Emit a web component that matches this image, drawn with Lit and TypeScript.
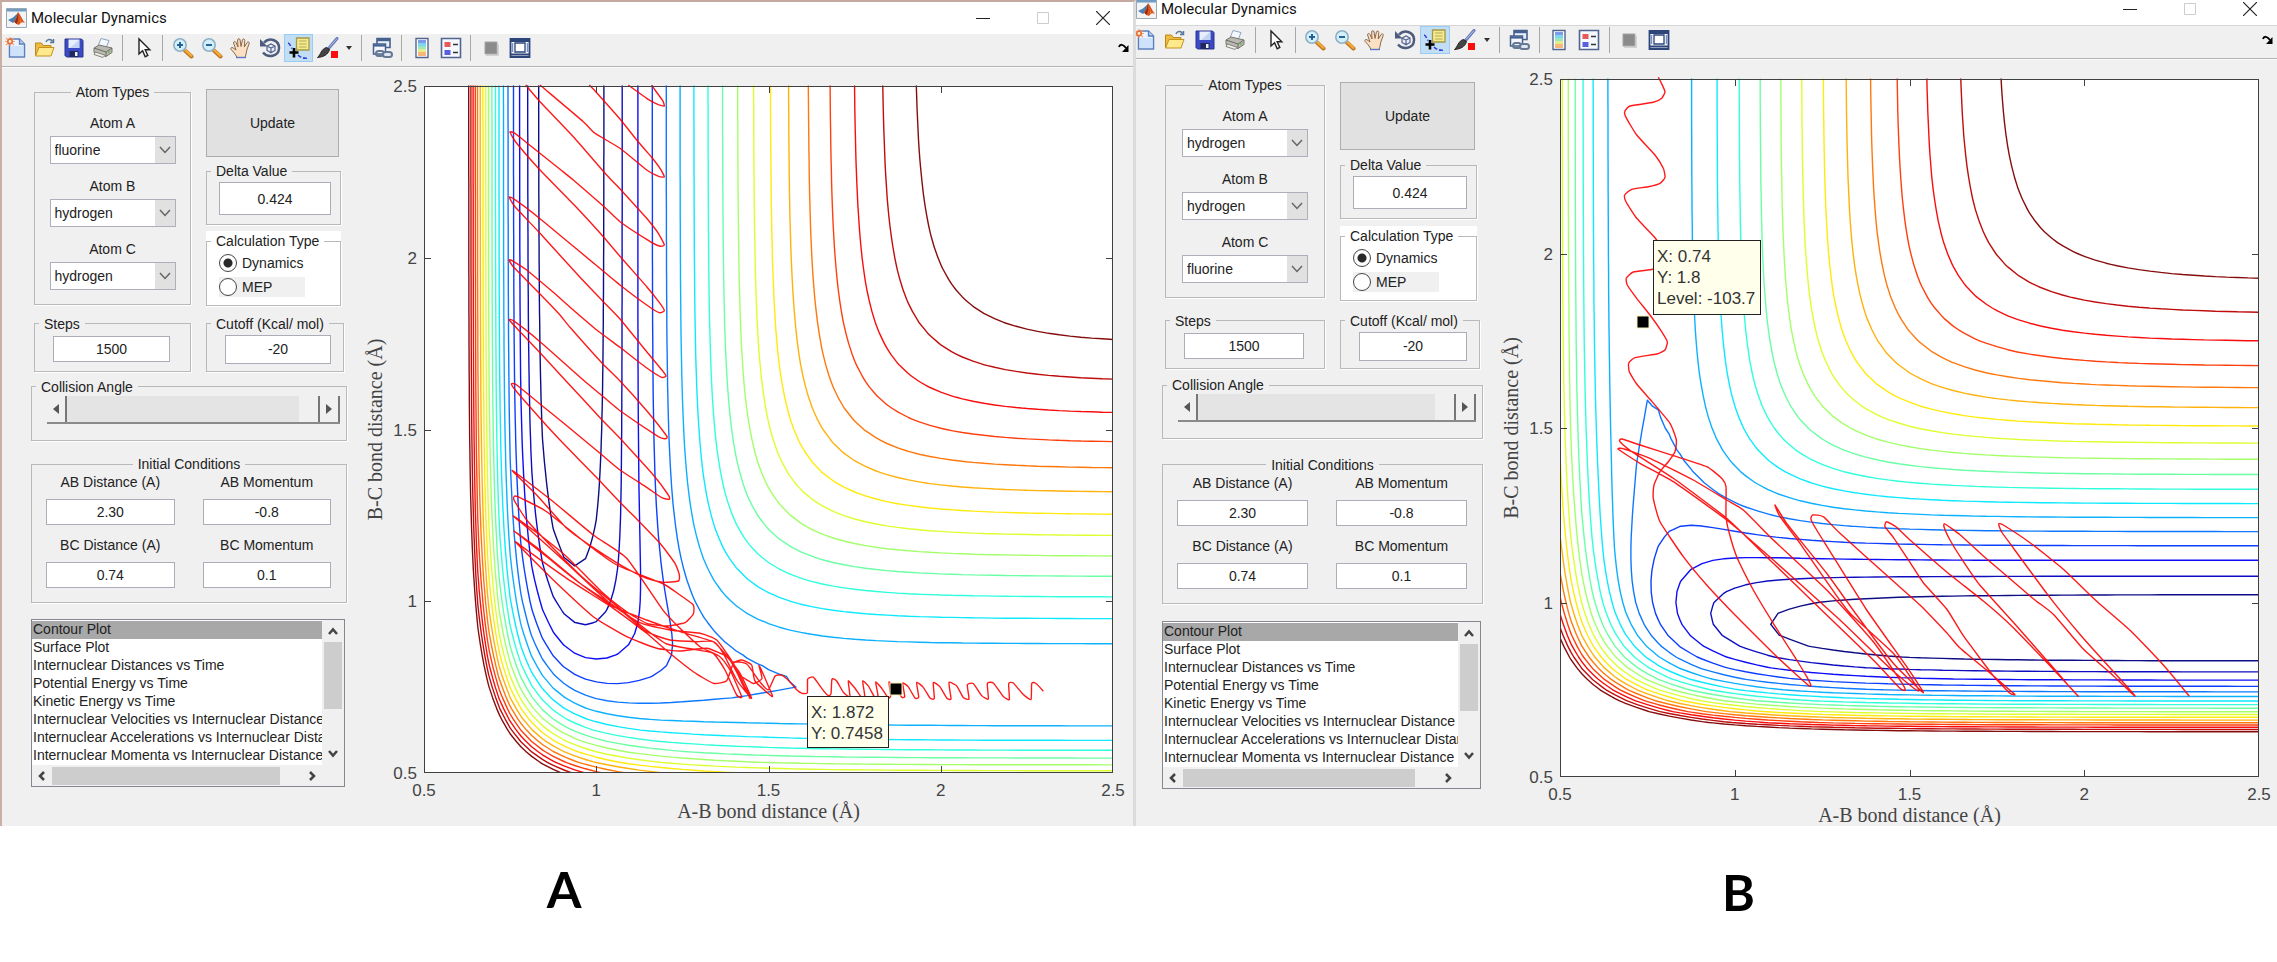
import { LitElement, html, css, svg } from "lit";
import { customElement, property } from "lit/decorators.js";

type Pt = [number, number];

/* ---------- potential energy surface (collinear LEPS, F + H2) ---------- */

const HF = { d: 141.2, a: 2.2189, re: 0.9168 };
const HH = { d: 109.5, a: 1.942, re: 0.7419 };
const SATO = 0.193;

function terms(m: { d: number; a: number; re: number }, r: number) {
  const e1 = Math.exp(-m.a * (r - m.re));
  const e2 = e1 * e1;
  const k = m.d / 4 / (1 + SATO);
  return {
    q: k * ((3 + SATO) * e2 - (2 + 6 * SATO) * e1),
    j: k * ((1 + 3 * SATO) * e2 - (6 + 2 * SATO) * e1),
  };
}

function energy(rHF: number, rHH: number): number {
  const a = terms(HF, rHF);
  const b = terms(HH, rHH);
  const c = terms(HF, rHF + rHH);
  const s = (a.j - b.j) ** 2 + (b.j - c.j) ** 2 + (c.j - a.j) ** 2;
  return a.q + b.q + c.q - Math.sqrt(s / 2);
}

const LEVELS = 18;
const TOP_LEVEL = -28.7;
const LEVEL_STEP = 6.25;

function jet(t: number): string {
  const ch = (c: number) =>
    Math.round(255 * Math.max(0, Math.min(1, 1.5 - Math.abs(4 * t - c))));
  return `rgb(${ch(3)},${ch(2)},${ch(1)})`;
}

/* Marching squares over a regular grid; each level becomes one path in data units. */
function contours(): { color: string; lines: [Pt, Pt][] }[] {
  const n = 64;
  const at = (i: number) => 0.5 + (i * 2) / n;
  const v: number[][] = [];
  for (let i = 0; i <= n; i++) {
    v.push([]);
    for (let j = 0; j <= n; j++) v[i].push(energy(at(i), at(j)));
  }
  const out: { color: string; lines: [Pt, Pt][] }[] = [];
  for (let k = 0; k < LEVELS; k++) {
    const lv = TOP_LEVEL - k * LEVEL_STEP;
    const lines: [Pt, Pt][] = [];
    for (let i = 0; i < n; i++) {
      for (let j = 0; j < n; j++) {
        const c: [number, number, number][] = [
          [at(i), at(j), v[i][j]],
          [at(i + 1), at(j), v[i + 1][j]],
          [at(i + 1), at(j + 1), v[i + 1][j + 1]],
          [at(i), at(j + 1), v[i][j + 1]],
        ];
        const hit: Pt[] = [];
        for (let e = 0; e < 4; e++) {
          const p = c[e];
          const q = c[(e + 1) % 4];
          if (p[2] < lv !== q[2] < lv) {
            const t = (lv - p[2]) / (q[2] - p[2]);
            hit.push([p[0] + t * (q[0] - p[0]), p[1] + t * (q[1] - p[1])]);
          }
        }
        for (let h = 0; h + 1 < hit.length; h += 2) lines.push([hit[h], hit[h + 1]]);
      }
    }
    out.push({ color: jet(1 - k / (LEVELS - 1)), lines });
  }
  return out;
}

const CONTOURS = contours();

/* ---------- trajectories ---------- */

/* Moves sampled points into chart units. */
const place = (ox: number, oy: number, kx: number, ky: number, p: number[]): Pt[] => {
  const out: Pt[] = [];
  for (let i = 0; i < p.length; i += 2) out.push([ox + p[i] / kx, oy + p[i + 1] / ky]);
  return out;
};

/* Catmull-Rom spline through the points. */
function spline(p: Pt[]): string {
  const f = (n: number) => n.toFixed(1);
  let d = `M${f(p[0][0])} ${f(p[0][1])}`;
  for (let i = 0; i + 1 < p.length; i++) {
    const a = p[Math.max(0, i - 1)];
    const b = p[i];
    const c = p[i + 1];
    const e = p[Math.min(p.length - 1, i + 2)];
    const k = 12;
    d += `C${f(b[0] + (c[0] - a[0]) / k)} ${f(b[1] + (c[1] - a[1]) / k)} ${f(
      c[0] - (e[0] - b[0]) / k
    )} ${f(c[1] - (e[1] - b[1]) / k)} ${f(c[0])} ${f(c[1])}`;
  }
  return d;
}

const TRACK_A: string[] = [
  spline(place(20, 3, 3, 3, [815, 45, 825, 60, 848, 92, 853, 108, 835, 104, 800, 85, 745, 45])),
  spline(place(20, 3, 3, 3, [628, 45, 650, 68, 720, 147, 770, 210, 815, 262, 840, 295, 853, 320, 838, 320, 800, 300, 720, 235, 645, 190, 610, 155, 480, 45])),
  spline([
    ...place(20, 3, 3, 3, [
      437, 45, 480, 95, 580, 200, 680, 315, 725, 362, 800, 445, 835, 490, 853, 525, 838, 528, 800, 508, 720, 455, 670, 408,
      580, 330, 540, 298, 440, 218, 405, 190, 390, 186, 410, 220, 480, 300, 580, 402, 670, 500, 725, 565, 800, 650, 840, 700,
      853, 722, 838, 728, 800, 705, 720, 645, 645, 583, 480, 446, 400, 386, 388, 382, 405, 410, 480, 490, 600, 622, 670, 695,
      720, 747, 800, 845, 850, 905, 858, 918, 845, 922, 795, 890, 720, 832, 650, 780, 580, 720, 520, 667, 440, 600, 400, 574,
      388, 569, 400, 590, 480, 672, 540, 735, 570, 772, 665, 878, 720, 933, 800, 1022, 860, 1098, 855, 1106, 835, 1100,
      720, 1022, 660, 972, 610, 930, 480, 815, 400, 752, 388, 750, 420, 785, 480, 848, 560, 935, 660, 1043, 720, 1105,
      820, 1215, 865, 1275, 868, 1288, 845, 1283, 800, 1252, 720, 1200, 660, 1150, 555, 1063, 490, 1010, 410, 945, 394, 942,
      410, 965, 480, 1045, 540, 1110, 655, 1228, 720, 1297, 770, 1347, 840, 1420, 885, 1480, 898, 1515, 895, 1533, 850, 1537,
      800, 1525, 730, 1490, 625, 1423, 560, 1375, 470, 1275, 397, 1202,
    ]),
    ...place(20, 373, 3, 3, [
      420, 108, 520, 185, 640, 285, 740, 355, 850, 512, 900, 565, 960, 620, 1020, 650, 1050, 690, 1085, 770, 1070, 765, 1035, 690,
      1000, 640, 940, 628, 860, 612, 800, 570, 700, 490, 600, 405, 520, 325, 440, 240, 402, 180, 405, 168, 430, 178, 500, 215,
      625, 315, 710, 375, 850, 432, 900, 465, 940, 495, 940, 522, 915, 548, 860, 558, 800, 550, 740, 515, 670, 460, 560, 350,
      480, 285, 400, 228, 450, 270, 560, 370, 690, 490, 780, 548, 870, 570, 960, 580, 1010, 600, 1060, 670, 1110, 775, 1090, 735,
      1050, 660, 1000, 605, 950, 605, 870, 600, 800, 575, 720, 510, 600, 430, 500, 350, 402, 273, 480, 330, 600, 430, 700, 500,
      800, 540, 900, 575, 1000, 605, 1030, 640, 1070, 720, 1115, 775, 1080, 700, 1040, 650, 980, 625, 900, 633, 830, 625,
      740, 590, 640, 530, 520, 420, 407, 307, 440, 330, 560, 415, 700, 505, 800, 580, 860, 632, 940, 695, 1000, 730, 1040, 722,
      1060, 670, 1085, 660, 1115, 675,
    ]),
    ...place(380, 2, 3, 2.0587, [
      45, 1260, 97, 1292, 85, 1270, 57, 1228, 66, 1255, 40, 1265, 0, 1250, 30, 1292, 10, 1270, -20, 1222, 20, 1225, 60, 1262,
      85, 1278, 105, 1250, 125, 1248, 150, 1262, 170, 1278, 185, 1285, 202, 1284, 203, 1256, 220, 1252, 245, 1275, 265, 1290,
      273, 1286, 276, 1256, 290, 1260, 310, 1283, 330, 1293, 325, 1260, 345, 1275, 363, 1292, 374, 1290, 368, 1260, 385, 1270,
      403, 1292, 414, 1290, 407, 1262, 425, 1275, 445, 1295, 452, 1290, 447, 1262, 465, 1275, 485, 1293, 494, 1292, 488, 1264,
      505, 1272, 525, 1295, 536, 1293, 530, 1263, 550, 1273, 570, 1295, 583, 1296, 580, 1263, 600, 1272, 620, 1295, 633, 1297,
      627, 1263, 650, 1270, 670, 1294, 687, 1297, 682, 1268, 700, 1265, 725, 1290, 745, 1297, 742, 1265, 760, 1264, 790, 1292,
      808, 1298, 806, 1265, 820, 1264, 850, 1288, 873, 1298, 875, 1265, 886, 1264, 910, 1281,
    ]),
  ]),
];

const TRACK_B: string[] = [
  spline(place(44, 1, 3, 3, [
    355, 52, 362, 65, 375, 95, 365, 115, 340, 127, 270, 138, 254, 155, 258, 172, 290, 225, 345, 285, 370, 325, 375, 352,
    360, 370, 325, 380, 275, 388, 254, 405, 258, 425, 290, 475, 345, 533, 380, 590, 375, 615, 338, 628, 280, 636, 259, 655,
    262, 675, 290, 715, 330, 765, 365, 815, 382, 845, 375, 870, 350, 882, 285, 893, 266, 910, 268, 935, 290, 972, 330, 1018,
    390, 1090, 409, 1140, 405, 1175, 385, 1205, 360, 1235, 342, 1275, 340, 1315, 360, 1385, 430, 1490, 500, 1575, 580, 1660,
    700, 1780, 770, 1845, 808, 1878, 812, 1874, 800, 1850, 770, 1800, 700, 1690, 640, 1590, 590, 1490, 568, 1420, 558, 1370,
    558, 1280, 545, 1255, 500, 1220, 400, 1187, 300, 1155, 245, 1137, 240, 1145, 280, 1178, 400, 1255, 560, 1375, 700, 1510,
    850, 1655, 1000, 1800, 1080, 1885, 1096, 1890, 1080, 1860, 1000, 1745, 860, 1590, 700, 1440, 610, 1350, 560, 1320,
    460, 1260, 330, 1195, 250, 1166, 235, 1168, 300, 1210, 400, 1265, 560, 1380, 700, 1500, 900, 1680, 1050, 1825, 1125, 1887,
    1135, 1887, 1060, 1780, 930, 1660, 860, 1565, 780, 1450, 720, 1370, 705, 1335, 740, 1390, 860, 1540, 950, 1665,
    1060, 1810, 1150, 1898, 1100, 1820, 980, 1650, 880, 1490, 830, 1410, 813, 1378, 818, 1365, 850, 1370, 900, 1420,
    1050, 1555, 1140, 1635, 1220, 1718, 1260, 1764, 1350, 1839, 1415, 1895, 1425, 1904, 1410, 1900, 1360, 1847, 1270, 1727,
    1220, 1647, 1150, 1568, 1110, 1507, 1060, 1432, 1035, 1400, 1040, 1385, 1070, 1402, 1110, 1440, 1220, 1536, 1330, 1623,
    1420, 1703, 1520, 1807, 1600, 1892, 1615, 1909, 1590, 1882, 1540, 1823, 1420, 1687, 1320, 1576, 1270, 1504, 1230, 1440,
    1212, 1400, 1215, 1392, 1260, 1424, 1330, 1488, 1480, 1616, 1540, 1663, 1630, 1767, 1720, 1847, 1775, 1900, 1785, 1908,
    1760, 1879, 1630, 1735, 1520, 1600, 1420, 1464, 1385, 1416, 1376, 1392, 1390, 1395, 1470, 1448, 1570, 1528, 1670, 1624,
    1770, 1711, 1870, 1815, 1948, 1909,
  ])),
];

/* ---------- window descriptions ---------- */

interface Chart {
  width: number;
  height: number;
  box: { x: number; y: number; w: number; h: number };
  swap: boolean;
  tracks: string[];
  tip: { x: number; y: number; w: number; h: number; top: number; lines: string[] };
  marker: Pt;
}

interface Sim {
  key: string;
  atoms: string[];
  chart: Chart;
}

const SIMS: Sim[] = [
  {
    key: "a",
    atoms: ["fluorine", "hydrogen", "hydrogen"],
    chart: {
      width: 773,
      height: 759,
      box: { x: 64, y: 19, w: 689, h: 687 },
      swap: false,
      tracks: TRACK_A,
      tip: { x: 447, y: 629, w: 81, h: 51, top: 22, lines: ["X: 1.872", "Y: 0.7458"] },
      marker: [536, 622],
    },
  },
  {
    key: "b",
    atoms: ["hydrogen", "hydrogen", "fluorine"],
    chart: {
      width: 781,
      height: 767,
      box: { x: 64, y: 20, w: 699, h: 698 },
      swap: true,
      tracks: TRACK_B,
      tip: { x: 157, y: 181, w: 107, h: 74, top: 22, lines: ["X: 0.74", "Y: 1.8", "Level: -103.7"] },
      marker: [147, 263],
    },
  },
];

const PLOTS = [
  "Contour Plot",
  "Surface Plot",
  "Internuclear Distances vs Time",
  "Potential Energy vs Time",
  "Kinetic Energy vs Time",
  "Internuclear Velocities vs Internuclear Distance",
  "Internuclear Accelerations vs Internuclear Distance",
  "Internuclear Momenta vs Internuclear Distance",
];

/* ---------- icons ---------- */

const icon = (body: unknown) =>
  html`<svg width="22" height="22" viewBox="0 0 22 22" fill="none" aria-hidden="true">${body}</svg>`;

const lens = (plus: boolean) => svg`
  <path d="M13 13.5l6.5 6" stroke="#b9731a" stroke-width="4" stroke-linecap="round"/>
  <path d="M13.4 13.2l6 5.6" stroke="#f6a93b" stroke-width="2.4" stroke-linecap="round"/>
  <circle cx="8" cy="8" r="6.2" fill="#d3effa" stroke="#8fb0c4" stroke-width="1.6"/>
  <path d="M5 8h6" stroke="#1d5c97" stroke-width="1.9"/>
  ${plus ? svg`<path d="M8 5v6" stroke="#1d5c97" stroke-width="1.9"/>` : ""}`;

const ICONS: Record<string, unknown> = {
  new: svg`
    <path d="M4.5 2h10l5 5v13h-15z" fill="#eaf3ff" stroke="#5b7fbd" stroke-width="1.5"/>
    <path d="M6 9h12v10H6z" fill="#cfe2fb"/>
    <path d="M14.5 2v5h5" fill="#b7cfee" stroke="#5b7fbd" stroke-width="1.3"/>
    <path d="M1 1l8 7M9 1L1 8M5 0v9M0 4.5h10" stroke="#f0a071" stroke-width="1.1"/>
    <circle cx="5" cy="4.5" r="2.2" fill="#fff0c8" stroke="#ea6c33" stroke-width="1.6"/>`,
  open: svg`
    <path d="M12 5c1-3 5-3.500 6.500-.5M19.500 2v3.500h-3.500" stroke="#56789a" stroke-width="1.5"/>
    <path d="M1.500 18V6h6l1.500 2.500h8V18z" fill="#eebb3c" stroke="#b98a1c"/>
    <path d="M1.500 19L5 10.500h15L17 19z" fill="#ffe98c" stroke="#c2941f"/>`,
  save: svg`
    <path d="M2 2h16.500l1.500 1.500V20H3.500L2 18.500z" fill="#3b4ac4" stroke="#2a348f"/>
    <path d="M5.500 2.500h11v8.500h-11z" fill="#e8eefb"/><path d="M7 11l9-8v8z" fill="#c3d3f2"/>
    <path d="M6.500 14h9v6h-9z" fill="#20285e"/><path d="M12 15h2.500v4H12z" fill="#eef1fa"/>`,
  print: svg`
    <path d="M6 9L9 1.500l8 2-3 7.500z" fill="#f3f8ff" stroke="#8fa4bd"/>
    <path d="M2 11l5-3 13 3v4.500l-6 4-12-4z" fill="#b9b9b2" stroke="#77776f"/>
    <path d="M2 11l12 4 6-4M14 15v4.500" stroke="#6d6d66"/>
    <path d="M3.500 15l9.500 3.300-2 2.200-9-3z" fill="#f0f0ea" stroke="#85857c"/>
    <path d="M16 15.500l2-1.200" stroke="#6abf4b" stroke-width="1.500"/>`,
  pointer: svg`<path d="M7 2v15l3.600-3.300 2.600 6 2.600-1.200-2.600-5.700h4.600z" fill="#fff" stroke="#222" stroke-width="1.400"/>`,
  zoomin: lens(true),
  zoomout: lens(false),
  hand: svg`
    <path d="M7 20.500C5.500 17 3 14.500 1 12.300c-.8-1.300.8-2.300 2-1.500L6 13 3.600 6c-.4-1.600 1.700-2.200 2.300-.7L8 10 7.600 3c0-1.700 2.300-1.700 2.500 0l.9 6.500L12.400 3c.4-1.600 2.500-1.200 2.400.4L14.300 10l2.800-4.500c.9-1.400 2.700-.5 2.100 1L16.800 13c-.5 3-.8 5-1.800 7.500z" fill="#fbe0c4" stroke="#8a6a4e" stroke-width="1"/>
    <path d="M6 20.500h10" stroke="#5d76c8" stroke-width="1.400"/>`,
  rotate: svg`
    <path d="M5 5.500C11-.5 20.500 3.500 20 11.500S9 21.500 4 15.500" stroke="#4d5c7c" stroke-width="2.500"/>
    <path d="M1 2v7.500h7.500z" fill="#4d5c7c"/>
    <path d="M8 9l4-2 4 2v4.500l-4 2.300-4-2.300zM8 9l4 2 4-2M12 11v4.800" fill="#e4ecf8" stroke="#52648a" stroke-width="1.200"/>`,
  datatip: svg`
    <path d="M8.500 1h12.500v12H8.500z" fill="#f6ea8e" stroke="#a49a4a" stroke-width="1.300"/>
    <path d="M11 4h7.500M11 7h7.500M11 10h7.500" stroke="#b4a858" stroke-width="1.200"/>
    <path d="M0 6c2 .5 2.500 3.500 4 5.500M10 18c2 2.500 5 3 9 3.500" stroke="#3340e0" stroke-width="1.600" stroke-dasharray="4 2"/>
    <path d="M6 11v9.500M1.500 15.500h9" stroke="#000" stroke-width="2.600"/>`,
  brush: svg`
    <path d="M20 1.500l-8.500 10" stroke="#6478b6" stroke-width="3" stroke-linecap="round"/>
    <path d="M20 1.500l-8 9" stroke="#b9c6ea" stroke-width="1"/>
    <path d="M12.500 12.500C11 18 6 20 .5 20.500 4 17.500 4 12 9.500 10.500z" fill="#454545" stroke="#222"/>
    <path d="M14 14h7v7h-7z" fill="#fb0d0d"/>`,
  link: svg`
    <path d="M6 1.500h13v9H6z" fill="#e8eef8" stroke="#44618f" stroke-width="1.600"/><path d="M6 3h13" stroke="#44618f" stroke-width="2.400"/>
    <path d="M2.500 7h12v10h-12z" fill="#f4f8fe" stroke="#44618f" stroke-width="1.500"/><path d="M2.500 8.500h12" stroke="#44618f" stroke-width="2.200"/>
    <rect x="5" y="14" width="8" height="5" rx="2.500" stroke="#667894" stroke-width="2"/>
    <rect x="12" y="15" width="9" height="5" rx="2.500" fill="#dfe6f2" stroke="#667894" stroke-width="2"/>`,
  colorbar: svg`
    <path d="M5 1.500h12v19H5z" fill="#fff" stroke="#50658f" stroke-width="1.400"/>
    <path d="M7 3h8v3H7z" fill="#7d9be8"/><path d="M7 6h8v3H7z" fill="#7fd4ee"/><path d="M7 9h8v3H7z" fill="#9be6bf"/>
    <path d="M7 12h8v3H7z" fill="#e2ee8c"/><path d="M7 15h8v4H7z" fill="#fbb77a"/>`,
  legend: svg`
    <path d="M1.500 1.500h19v19h-19z" fill="#f5f8fe" stroke="#51658e" stroke-width="1.600"/>
    <path d="M4.500 5h6v5h-6z" fill="#e8595a"/><path d="M4.500 13h6v5h-6z" fill="#5960dd"/>
    <path d="M13 7.500h5M13 15.500h5" stroke="#333" stroke-width="1.600"/>`,
  hide: svg`<path d="M5 5h12v12H5z" fill="#8b8b8b" stroke="#a4a4a4"/><path d="M6 18h12V7" stroke="#c6c6c6" stroke-width="1.500"/>`,
  layout: svg`
    <path d="M1.500 2h19v18h-19z" fill="#f2f6fd" stroke="#2e4579" stroke-width="1.800"/>
    <path d="M1.500 4h19M1.500 17.500h19" stroke="#2e4579" stroke-width="2.200"/>
    <path d="M6 6h10v9H6z" fill="#fff" stroke="#2e4579" stroke-width="1.300"/>
    <path d="M3.500 6v9M18.500 6v9" stroke="#7a92c4" stroke-width="1.400"/>`,
};

const TOOLS: [string, string][] = [
  ["new", "New Figure"], ["open", "Open File"], ["save", "Save Figure"], ["print", "Print Figure"], ["|", ""],
  ["pointer", "Edit Plot"], ["|", ""],
  ["zoomin", "Zoom In"], ["zoomout", "Zoom Out"], ["hand", "Pan"], ["rotate", "Rotate 3D"], ["datatip", "Data Cursor"], ["brush", "Brush"],
  ["more", "Brush options"], ["|", ""],
  ["link", "Link Plot"], ["|", ""],
  ["colorbar", "Insert Colorbar"], ["legend", "Insert Legend"], ["|", ""],
  ["hide", "Hide Plot Tools"], ["layout", "Show Plot Tools"],
];

/* ---------- chart ---------- */

@customElement("energy-chart")
export class EnergyChart extends LitElement {
  @property({ attribute: false }) chart!: Chart;

  static styles = css`
    :host { display: block; }
    .chart { display: block; width: 100%; height: auto; }
    .tick { font: 17px "Liberation Sans", Arial, sans-serif; fill: #444; }
    .axis { font: 20px "Liberation Serif", "Times New Roman", serif; fill: #444; }
    .tip { font: 17px "Liberation Sans", Arial, sans-serif; fill: #333; }
  `;

  render() {
    const { width, height, box, swap, tracks, tip, marker } = this.chart;
    const ux = (v: number) => box.x + ((v - 0.5) / 2) * box.w;
    const uy = (v: number) => box.y + box.h - ((v - 0.5) / 2) * box.h;
    const pos = ([a, b]: Pt) => {
      const [x, y] = swap ? [b, a] : [a, b];
      return `${ux(x).toFixed(1)} ${uy(y).toFixed(1)}`;
    };
    const right = box.x + box.w;
    const bottom = box.y + box.h;
    const ticks = [0.5, 1, 1.5, 2, 2.5];
    const marks = [1, 1.5, 2]
      .map((t) => {
        const x = Math.round(ux(t)) + 0.5;
        const y = Math.round(uy(t)) + 0.5;
        return `M${x} ${box.y}v7M${x} ${bottom}v-7M${box.x} ${y}h7M${right} ${y}h-7`;
      })
      .join("");
    const clip = swap ? "clip-b" : "clip-a";
    return html`
      <svg class="chart" viewBox="0 0 ${width} ${height}" role="img" aria-label="Contour plot with trajectory">
        <defs>
          <clipPath id=${clip}><rect x=${box.x} y=${box.y - 2} width=${box.w} height=${box.h + 2}></rect></clipPath>
        </defs>
        <rect x=${box.x} y=${box.y} width=${box.w} height=${box.h} fill="#fff"></rect>
        <g clip-path="url(#${clip})" fill="none">
          ${CONTOURS.map(
            (c) => svg`<path stroke=${c.color} stroke-width="1.4" stroke-linecap="round" stroke-opacity="0.95"
              d=${c.lines.map((l) => `M${pos(l[0])}L${pos(l[1])}`).join("")}></path>`
          )}
          ${tracks.map(
            (d) => svg`<path d=${d} stroke="#ff0000" stroke-opacity="0.9" stroke-width="1.4" stroke-linejoin="round"></path>`
          )}
        </g>
        <path d=${marks} stroke="#404040" fill="none"></path>
        <rect x=${box.x + 0.5} y=${box.y + 0.5} width=${box.w - 1} height=${box.h - 1} fill="none" stroke="#404040"></rect>
        ${ticks.map(
          (t) => svg`
            <text class="tick" x=${ux(t)} y=${bottom + 23} text-anchor="middle">${t}</text>
            <text class="tick" x=${box.x - 7} y=${uy(t) + 6} text-anchor="end">${t}</text>`
        )}
        <text class="axis" x=${box.x + box.w / 2} y=${bottom + 45} text-anchor="middle">A-B bond distance (Å)</text>
        <text class="axis" text-anchor="middle" transform="translate(22 ${box.y + box.h / 2}) rotate(-90)">B-C bond distance (Å)</text>
        <rect x=${marker[0] - 6} y=${marker[1] - 6} width="12" height="12" fill="#000" stroke="#f5f0b8"></rect>
        <rect x=${tip.x + 0.5} y=${tip.y + 0.5} width=${tip.w} height=${tip.h} fill="#ffffec" stroke="#222"></rect>
        ${tip.lines.map(
          (l, i) => svg`<text class="tip" x=${tip.x + 4} y=${tip.y + tip.top + i * 21}>${l}</text>`
        )}
      </svg>
    `;
  }
}

/* ---------- application window ---------- */

@customElement("dynamics-window")
export class DynamicsWindow extends LitElement {
  @property({ attribute: false }) sim!: Sim;

  static styles = css`
    :host {
      display: block;
      background: #f0f0f0;
      font: 14px/16px "Liberation Sans", Arial, sans-serif;
      color: #222;
      --panel: 360px;
      --inset: 26px;
      --head: 18px;
      --foot: 37px;
      --tool: 30px;
      --tool-start: -6px;
      --sep: 10px;
      --bar: 25px;
      --col: 160px;
      --side-gap: 7px;
      --win-end: 17px;
    }
    :host(.first) {
      border-left: 2px solid #cbaea4;
      border-top: 2px solid #c4a9a1;
      border-right: 3px solid #dcdcdc;
      --panel: 358px;
      --inset: 29px;
      --head: 17px;
      --foot: 39px;
      --tool: 29px;
      --tool-start: -1px;
      --sep: 11px;
      --bar: 32px;
      --col: 157px;
      --side-gap: 6px;
      --win-end: 20px;
    }
    * { box-sizing: border-box; }
    button, input, select { font: inherit; color: inherit; margin: 0; border-radius: 0; }
    button { padding: 0; border: 0; background: none; }

    .titlebar {
      height: var(--bar);
      background: #fff;
      display: flex;
      align-items: flex-end;
      overflow: hidden;
    }
    .titlebar > * { flex: none; height: 32px; display: flex; align-items: center; }
    .title { flex: 1; gap: 4px; padding-left: 4px; font: 15px/20px Roboto, "Segoe UI", sans-serif; color: #111; }
    :host(:not(.first)) .title { padding-left: 0; }
    .winbuttons { gap: 40px; padding-right: var(--win-end); }
    .winbuttons button { width: 20px; height: 20px; display: grid; place-items: center; }

    .toolbar {
      height: 33px;
      border-bottom: 1px solid #b4b4b4;
      display: flex;
      align-items: center;
      overflow: hidden;
      padding: 0 3px 4px 0;
      box-shadow: 0 1px #fafafa;
    }
    :host(:not(.first)) .toolbar { border-top: 1px solid #d6d6d6; height: 34px; }
    .tools { display: flex; align-items: center; margin-left: var(--tool-start); flex: 1; }
    .tool { width: var(--tool); height: 28px; display: grid; place-items: center; }
    .tool.on { background: #c2def5; box-shadow: inset 0 0 0 1px #99cbf3; }
    .tool.more { width: 14px; }
    .sep { width: var(--sep); height: 26px; display: grid; justify-content: center; }
    .sep::before { content: ""; width: 1px; background: #a8a8a8; }

    .body { display: grid; grid-template-columns: var(--panel) minmax(0, 1fr); }
    .panel {
      padding: var(--head) 13px var(--foot) var(--inset);
      display: flex;
      flex-direction: column;
      justify-content: space-between;
    }

    fieldset {
      margin: 0;
      min-width: 0;
      padding: 0;
      border: 1px solid #b9b9b9;
      box-shadow: 1px 1px #fff;
    }
    legend { padding: 0 5px; margin-left: 4px; line-height: 16px; }
    legend.mid { margin: 0 auto; }

    .top { display: grid; grid-template-columns: var(--col) 1fr; gap: 15px; padding: 0 6px 0 3px; }
    .atoms { height: 221px; }
    .atomlist { display: grid; align-content: start; justify-items: center; padding-top: 15px; }
    .atom { display: grid; align-content: start; justify-items: center; gap: 5px; height: 63px; }
    .pick { position: relative; display: block; width: 126px; height: 28px; }
    .pick select {
      appearance: none;
      width: 100%;
      height: 100%;
      border: 1px solid #adb0ba;
      background: linear-gradient(to left, #e1e1e1 20px, #fff 20px);
      padding: 0 22px 0 4px;
    }
    .pick svg { position: absolute; right: 5px; top: 10px; pointer-events: none; }

    .side { display: grid; align-content: start; gap: var(--side-gap); padding-top: 5px; }
    .update { height: 68px; margin-right: 2px; background: #e1e1e1; border: 1px solid #adadad; }
    .delta { height: 62px; }
    .box {
      display: block;
      border: 1px solid #abadb8;
      background: #fff;
      text-align: center;
      padding: 0;
      width: 100%;
    }
    .delta .field { padding: 3px 9px 0 12px; }
    .delta .box { height: 33px; }
    .calc { background: #fff; padding-top: 2px; height: 76px; }
    .calc fieldset { height: 73px; }
    .radios { display: grid; padding: 4px 0 0 12px; justify-items: start; gap: 4px; }
    .radio { display: flex; align-items: center; gap: 5px; height: 20px; width: 86px; }
    .radio.off { background: #f0f0f0; }
    .radio input {
      appearance: none;
      width: 18px;
      height: 18px;
      border: 1px solid #444;
      border-radius: 50%;
      background: #fff;
    }
    .radio input:checked { background: radial-gradient(circle, #2a2a2a 4px, #fff 5px); }

    .pair { display: grid; grid-template-columns: var(--col) 1fr; gap: 15px; padding: 0 3px 0 3px; margin-top: 2px; }
    .pair fieldset { height: 56px; }
    .pair .field { padding: 4px 20px 0 18px; }
    .pair .field.right { padding: 3px 12px 0 18px; }
    .pair .box { height: 26px; }
    .pair .right .box { height: 29px; }

    .collision { height: 62px; }
    .slider { display: flex; height: 28px; margin: 1px 6px 0 15px; border-bottom: 2px solid #8a8a8a; }
    .slider button { width: 20px; display: grid; place-items: center; border-right: 2px solid #777; }
    .slider input { appearance: none; flex: 1; min-width: 0; background: #e4e4e4; height: 100%; }
    .slider input::-webkit-slider-thumb {
      appearance: none;
      width: 21px;
      height: 26px;
      background: #f0f0f0;
      border-right: 2px solid #777;
    }

    .initial { height: 147px; margin-top: 9px; }
    .grid4 { display: grid; grid-template-columns: 1fr 1fr; padding: 2px 15px 0 14px; column-gap: 28px; row-gap: 12px; }
    .cell { display: grid; align-content: start; justify-items: center; gap: 9px; height: 51px; }
    .cell .box { height: 26px; }

    .list {
      margin: 9px 2px 0 0;
      height: 168px;
      border: 1px solid #828790;
      display: grid;
      grid-template-columns: minmax(0, 1fr) 22px;
      grid-template-rows: 1fr 22px;
      background: #f0f0f0;
    }
    .list select {
      border: 0;
      padding: 1px 0 0;
      background: #fff;
      outline: 0;
      overflow: hidden;
      height: 145px;
      width: 100%;
      scrollbar-width: none;
    }
    .list option { padding: 0 0 0 1px; height: 18px; min-height: 18px; line-height: 20px; color: #222; }
    .list option:checked { background: #a8a8a8 linear-gradient(#a8a8a8, #a8a8a8); color: #222; }
    .vbar { display: flex; flex-direction: column; align-items: center; }
    .vbar svg, .hbar svg { flex: none; }
    .vbar .thumb { width: 18px; height: 67px; background: #cdcdcd; }
    .vbar .gap { flex: 1; }
    .hbar { display: flex; align-items: center; }
    .hbar .thumb { height: 18px; background: #cdcdcd; flex: 225; }
    .hbar .gap { flex: 22; }
  `;

  private tool([key, label]: [string, string]) {
    if (key === "|") return html`<span class="sep"></span>`;
    if (key === "more")
      return html`<button class="tool more" aria-label=${label}>
        <svg width="8" height="5" viewBox="0 0 8 5"><path d="M1 0h6L4 4z" fill="#333"></path></svg>
      </button>`;
    return html`<button class="tool ${key === "datatip" ? "on" : ""}" aria-label=${label}>${icon(ICONS[key])}</button>`;
  }

  private chevron(d: string) {
    return html`<svg width="20" height="22" viewBox="0 0 20 22" fill="none" stroke="#444" stroke-width="2.500"><path d=${d}></path></svg>`;
  }

  private input(id: string, label: string, value: string) {
    return html`<div class="cell"><label for=${id}>${label}</label><input class="box" id=${id} .value=${value} /></div>`;
  }

  render() {
    const s = this.sim;
    return html`
      <header class="titlebar">
        <div class="title">
          <svg width="21" height="20" viewBox="0 0 21 20" aria-hidden="true">
            <path d="M.5.5h20v19H.5z" fill="#f4f4f4" stroke="#9aa7b5"></path>
            <path d="M1 1h19v2.500H1z" fill="#6f9dc4"></path>
            <path d="M2 12l5-2.500L12 5l-2 7-3 3z" fill="#4a7fb0"></path>
            <path d="M12 4c2 2 4 7 7 11-3-1.500-4-.5-6 2l-2.500-1L8 13.500C10 11 11 7 12 4z" fill="#d9541e"></path>
            <path d="M12 4c-.5 4-1.500 7.500-3.500 10l2 2C12 13 12.500 8 12 4z" fill="#8c2a12"></path>
            <path d="M13 7c1 3 1.500 5 1 8l1-1z" fill="#f6a43c"></path>
          </svg>
          <span>Molecular Dynamics</span>
        </div>
        <div class="winbuttons">
          <button aria-label="Minimize"><svg width="14" height="14" stroke="#222"><path d="M0 7.500h14"></path></svg></button>
          <button aria-label="Maximize"><svg width="14" height="14" stroke="#ccc" fill="none"><path d="M1.500 1.500h11v11h-11z"></path></svg></button>
          <button aria-label="Close"><svg width="14" height="14" stroke="#222" stroke-width="1.200"><path d="M0 0l14 14M14 0L0 14"></path></svg></button>
        </div>
      </header>
      <nav class="toolbar">
        <div class="tools">${TOOLS.map((t) => this.tool(t))}</div>
        <svg width="12" height="10" viewBox="0 0 12 10" aria-hidden="true">
          <path d="M1 4c1-3 4-3 7 1" stroke="#000" stroke-width="2" fill="none"></path><path d="M10.500 2v7H4z" fill="#000"></path>
        </svg>
      </nav>
      <div class="body">
        <form class="panel" @submit=${(e: Event) => e.preventDefault()}>
          <div class="top">
            <fieldset class="atoms">
              <legend class="mid">Atom Types</legend>
              <div class="atomlist">
                ${s.atoms.map(
                  (a, i) => html`<div class="atom">
                    <label for="atom${i}">Atom ${"ABC"[i]}</label>
                    <span class="pick">
                      <select id="atom${i}">
                        ${["hydrogen", "fluorine"].map((o) => html`<option ?selected=${o === a}>${o}</option>`)}
                      </select>
                      <svg width="12" height="8" fill="none" stroke="#666" stroke-width="1.500"><path d="M1 1l5 5.500L11 1"></path></svg>
                    </span>
                  </div>`
                )}
              </div>
            </fieldset>
            <div class="side">
              <button class="update">Update</button>
              <fieldset class="delta">
                <legend><label for="delta">Delta Value</label></legend>
                <div class="field"><input class="box" id="delta" value="0.424" /></div>
              </fieldset>
              <div class="calc">
                <fieldset>
                  <legend>Calculation Type</legend>
                  <div class="radios">
                    <label class="radio"><input type="radio" name="calc" checked />Dynamics</label>
                    <label class="radio off"><input type="radio" name="calc" />MEP</label>
                  </div>
                </fieldset>
              </div>
            </div>
          </div>
          <div class="pair">
            <fieldset>
              <legend><label for="steps">Steps</label></legend>
              <div class="field"><input class="box" id="steps" value="1500" /></div>
            </fieldset>
            <fieldset>
              <legend><label for="cutoff">Cutoff (Kcal/ mol)</label></legend>
              <div class="field right"><input class="box" id="cutoff" value="-20" /></div>
            </fieldset>
          </div>
          <fieldset class="collision">
            <legend><label for="angle">Collision Angle</label></legend>
            <div class="slider">
              <button type="button" aria-label="Decrease"><svg width="6" height="10"><path d="M6 0v10L0 5z" fill="#555"></path></svg></button>
              <input id="angle" type="range" min="0" max="180" value="180" />
              <button type="button" aria-label="Increase"><svg width="6" height="10"><path d="M0 0v10l6-5z" fill="#555"></path></svg></button>
            </div>
          </fieldset>
          <fieldset class="initial">
            <legend class="mid">Initial Conditions</legend>
            <div class="grid4">
              ${this.input("abd", "AB Distance (A)", "2.30")} ${this.input("abm", "AB Momentum", "-0.8")}
              ${this.input("bcd", "BC Distance (A)", "0.74")} ${this.input("bcm", "BC Momentum", "0.1")}
            </div>
          </fieldset>
          <div class="list">
            <select size="8" aria-label="Plot type">
              ${PLOTS.map((p, i) => html`<option ?selected=${i === 0}>${p}</option>`)}
            </select>
            <div class="vbar">
              ${this.chevron("M6 14l4-4.500 4 4.500")}
              <span class="thumb"></span><span class="gap"></span>
              ${this.chevron("M6 8l4 4.500L14 8")}
            </div>
            <div class="hbar">
              ${this.chevron("M12 7l-4 4 4 4")}
              <span class="thumb"></span><span class="gap"></span>
              ${this.chevron("M8 7l4 4-4 4")}
            </div>
          </div>
        </form>
        <energy-chart .chart=${s.chart}></energy-chart>
      </div>
    `;
  }
}

@customElement("app-root")
export class AppRoot extends LitElement {
  static styles = css`
    :host { display: block; min-height: 100vh; background: #fff; }
    .page { display: grid; grid-template-columns: 1136fr 1141fr; align-items: start; }
    figure { margin: 0; min-width: 0; }
    figcaption {
      font: bold 50px/60px Lato, Carlito, sans-serif;
      color: #000;
      text-align: center;
      padding: 33px 8px 0 0;
    }
    figure:last-child figcaption { padding: 36px 0 0 64px; }
  `;

  render() {
    return html`<main class="page">
      ${SIMS.map(
        (s, i) => html`<figure>
          <dynamics-window class=${i === 0 ? "first" : "second"} .sim=${s}></dynamics-window>
          <figcaption>${s.key.toUpperCase()}</figcaption>
        </figure>`
      )}
    </main>`;
  }
}
